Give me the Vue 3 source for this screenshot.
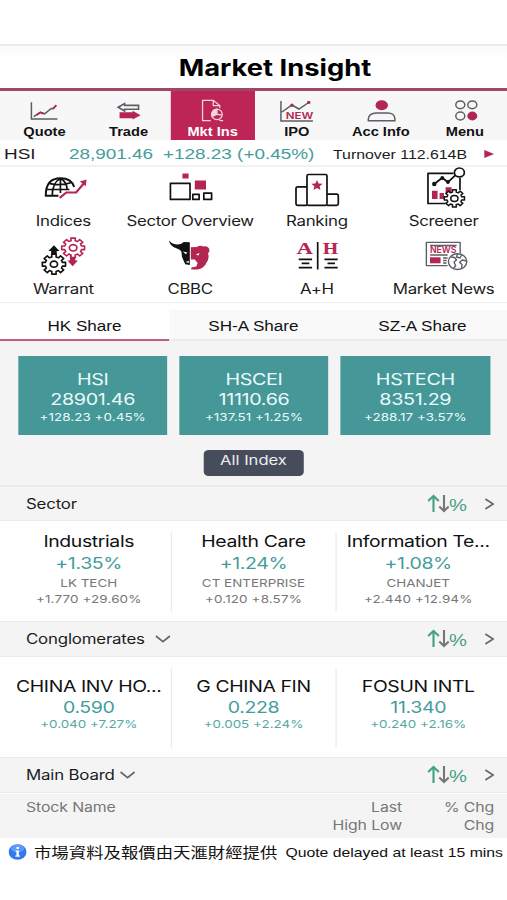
<script setup>
import { ref } from 'vue'

const activeNav = ref('mkt')
const activeTab = ref('HK Share')

const navItems = [
  { id: 'quote', label: 'Quote' },
  { id: 'trade', label: 'Trade' },
  { id: 'mkt', label: 'Mkt Ins' },
  { id: 'ipo', label: 'IPO' },
  { id: 'acc', label: 'Acc Info' },
  { id: 'menu', label: 'Menu' },
]

const shortcuts = [
  { id: 'indices', label: 'Indices' },
  { id: 'sector', label: 'Sector Overview' },
  { id: 'ranking', label: 'Ranking' },
  { id: 'screener', label: 'Screener' },
  { id: 'warrant', label: 'Warrant' },
  { id: 'cbbc', label: 'CBBC' },
  { id: 'ah', label: 'A+H' },
  { id: 'news', label: 'Market News' },
]

const tabs = ['HK Share', 'SH-A Share', 'SZ-A Share']

const indices = [
  { name: 'HSI', value: '28901.46', change: '+128.23 +0.45%' },
  { name: 'HSCEI', value: '11110.66', change: '+137.51 +1.25%' },
  { name: 'HSTECH', value: '8351.29', change: '+288.17 +3.57%' },
]

const sections = [
  {
    title: 'Sector',
    dropdown: false,
    cards: [
      { name: 'Industrials', value: '+1.35%', stock: 'LK TECH', change: '+1.770 +29.60%' },
      { name: 'Health Care', value: '+1.24%', stock: 'CT ENTERPRISE', change: '+0.120 +8.57%' },
      { name: 'Information Te...', value: '+1.08%', stock: 'CHANJET', change: '+2.440 +12.94%' },
    ],
  },
  {
    title: 'Conglomerates',
    dropdown: true,
    cards: [
      { name: 'CHINA INV HO...', value: '0.590', change: '+0.040 +7.27%' },
      { name: 'G CHINA FIN', value: '0.228', change: '+0.005 +2.24%' },
      { name: 'FOSUN INTL', value: '11.340', change: '+0.240 +2.16%' },
    ],
  },
  { title: 'Main Board', dropdown: true, cards: [] },
]

// outline of an eight-toothed cog
function gear(cx, cy, rx, ry) {
  const pts = []
  for (let i = 0; i < 8; i++) {
    const mid = (i * Math.PI) / 4
    for (const [da, k] of [[-0.24, 0.72], [-0.19, 0.97], [0.19, 0.97], [0.24, 0.72]]) {
      const a = mid + da
      pts.push(`${(cx + Math.cos(a) * rx * k).toFixed(2)} ${(cy + Math.sin(a) * ry * k).toFixed(2)}`)
    }
  }
  return `M${pts.join('L')}Z`
}
</script>

<template>
  <div class="page">
    <div class="status"></div>
    <header class="header">Market Insight</header>

    <nav class="nav">
      <div
        v-for="item in navItems"
        :key="item.id"
        class="nav__item"
        :class="{ 'nav__item--active': item.id === activeNav }"
        @click="activeNav = item.id"
      >
        <svg class="nav__icon" viewBox="0 0 40 24" preserveAspectRatio="none" fill="none" stroke="#5b5e66" stroke-width="1.5">
          <template v-if="item.id === 'quote'">
            <path d="M7 3.3V20H33" />
            <path d="M9.3 17.7 16 13.4 20.3 14.8 26.7 9.5 28.5 9.8 31.7 6.5" />
            <path d="M12 16 16 13.4 19 14.6M28.5 9.8 32 6.2" stroke="#b32652" stroke-width="1.8" />
          </template>
          <template v-else-if="item.id === 'trade'">
            <path d="M9.6 8.2 16 4.6V6.4H30V10.2H16V12Z" stroke-width="1.6" />
            <path d="M11 13.2H24V11.8L32 16.2 24 20.6V19.2H11Z" fill="#b32652" stroke="none" />
          </template>
          <template v-else-if="item.id === 'mkt'">
            <g stroke="#f3d3de" stroke-width="1.3">
              <path d="M18 21.7H9.8V1.3H20.5L27 6.5V9M20.5 1.3V6.7H27" />
              <circle cx="24.2" cy="15.4" r="5.3" />
              <path d="M24.2 15.4V10.2A5.2 5.2 0 0 0 19.5 17.5Z" fill="#f3d3de" />
              <path d="M24.2 15.4 29 16M26 20.5 28 21.7H30.4" />
            </g>
          </template>
          <template v-else-if="item.id === 'ipo'">
            <path d="M4 2V22H36M5 13 15 6 22 10 31.7 3.5" />
            <g fill="#b32652" stroke="none">
              <circle cx="15" cy="6.2" r="1.7" />
              <circle cx="31.8" cy="3.4" r="1.7" />
              <text x="8.8" y="20" font-size="9.6" font-weight="600" textLength="27.5" lengthAdjust="spacingAndGlyphs">NEW</text>
            </g>
          </template>
          <template v-else-if="item.id === 'acc'">
            <ellipse cx="20.6" cy="6.3" rx="6.2" ry="5" fill="#b32652" stroke="none" />
            <path d="M7.2 21.8V20C7.2 16.5 10.5 14 15 14H26.5C31 14 33.8 16.5 33.8 20V21.8Z" />
          </template>
          <template v-else>
            <ellipse cx="15" cy="5.8" rx="4.5" ry="3.9" />
            <ellipse cx="27" cy="5.8" rx="4.5" ry="3.9" />
            <ellipse cx="15" cy="17" rx="4.5" ry="3.9" />
            <ellipse cx="27" cy="17" rx="5" ry="4.4" fill="#b32652" stroke="none" />
          </template>
        </svg>
        <span>{{ item.label }}</span>
      </div>
    </nav>

    <div class="ticker">
      <span class="ticker__name">HSI</span>
      <span class="ticker__up ticker__value">28,901.46</span>
      <span class="ticker__up ticker__change">+128.23 (+0.45%)</span>
      <span class="ticker__turnover">Turnover 112.614B</span>
      <i class="ticker__arrow"></i>
    </div>

    <section class="shortcuts">
      <div v-for="s in shortcuts" :key="s.id" class="shortcut">
        <svg class="shortcut__icon" viewBox="0 0 60 42" preserveAspectRatio="none" fill="none" stroke="#111" stroke-width="1.7" stroke-linejoin="round">
          <template v-if="s.id === 'indices'">
            <path d="M25.5 28.8H12.8C12.8 17 18 11.3 27.5 11.3 35 11.3 39.5 14.5 41.2 20" stroke-width="2" />
            <path d="M19.3 29C19.3 20 22 14 27.5 11.5M27.5 11.3V26M28 11.5C32 14 34 18 34.2 22.5M13.3 22.5H36.5M17 16.6C23 18 32 17.8 38.5 15.5" stroke-width="1.7" />
            <path d="M26.7 30.8 33.4 25.5H43.2L51 16.2" stroke="#b32652" stroke-width="2.2" stroke-linejoin="miter" />
            <path d="M53.6 12.6 47 14.6 52.8 19.2Z" fill="#b32652" stroke="none" />
          </template>
          <template v-else-if="s.id === 'sector'">
            <path d="M10.6 16.4H30.2V32.4H10.6ZM33 27.4H39.3V32.4H33ZM44 26.2H51.8V32.4H44Z" />
            <path d="M22.6 6.6H28.8V11.4H22.6ZM35 13.6H46.2V22.5H35Z" fill="#b32652" stroke="none" />
          </template>
          <template v-else-if="s.id === 'ranking'">
            <rect x="20.3" y="7.5" width="20" height="30.8" rx="1.5" />
            <path d="M20.3 19.8H11Q9.3 19.8 9.3 21.5V36.6Q9.3 38.3 11 38.3H20.3M40.3 27.2H50Q51.6 27.2 51.6 28.8V36.7Q51.6 38.3 50 38.3H40.3" />
            <path d="M30.3 13 31.9 16.4 36 16.8 32.9 19.2 33.8 22.9 30.3 21 26.8 22.9 27.7 19.2 24.6 16.8 28.7 16.4Z" fill="#b32652" stroke="none" />
          </template>
          <template v-else-if="s.id === 'screener'">
            <path d="M40 6.4H14.4V36.5H32M46.4 11V23" />
            <path d="M20.7 17 28.7 10.7 34.4 15.2 42 8.2" stroke-width="1.8" />
            <path d="M18.4 23.7H24V32H18.4ZM26 26H30.4V32H26ZM32 20.3H38V27H32Z" fill="#b32652" stroke="none" />
            <ellipse cx="45.8" cy="5.4" rx="5" ry="4.4" fill="#fff" />
            <g fill="#111" stroke="none">
              <circle cx="20.7" cy="17" r="2.2" />
              <circle cx="28.7" cy="11" r="1.9" />
              <circle cx="34.4" cy="15" r="1.9" />
            </g>
            <path :d="gear(40.8, 31.4, 10.6, 9)" fill="#fff" stroke-width="1.5" />
            <ellipse cx="40.8" cy="31.4" rx="3.6" ry="3" stroke-width="1.5" />
          </template>
          <template v-else-if="s.id === 'warrant'">
            <path d="M21 10.3 26.5 16H23.8V21H18.2V16H15.5Z" fill="#111" stroke="none" />
            <path d="M39.7 31.3 45 25.5H42.4V20H37V25.5H34.4Z" fill="#b32652" stroke="none" />
            <path :d="gear(21, 29.2, 12.2, 10.4)" fill="#fff" stroke-width="1.6" />
            <ellipse cx="21" cy="29.2" rx="3.6" ry="3" />
            <path :d="gear(40.2, 12.8, 12, 10.2)" fill="#fff" stroke="#b32652" stroke-width="1.6" />
            <ellipse cx="40.2" cy="12.8" rx="3.8" ry="3.2" stroke="#b32652" />
          </template>
          <template v-else-if="s.id === 'cbbc'">
            <g stroke="none">
              <path d="M9.2 5.3Q10 11.5 16.5 13.2L19.5 14.5 21.6 16.5 22.2 22 25.4 29.2 30 30V7.2L24 7 21 9 17.5 9.6Q12.5 9.6 9.2 5.3Z" fill="#111" />
              <path d="M31 12.2 37 12Q40 9.6 43.6 11.4 49.8 10.8 49.6 16.3L48.2 18.4Q50 23.5 46.5 28 44.5 33.5 37.5 34.4H31.5V32.4L36.5 31.5 37.8 28 35 24.5 31 24.5Z" fill="#b32652" />
              <path d="M23 16.5 27.5 17.4 26 19.2ZM25.8 27 29 25.8V28ZM36 19.4 39.6 18 38.8 20.6ZM31 28 34.5 28.8 31.5 30.6Z" fill="#fff" />
            </g>
          </template>
          <template v-else-if="s.id === 'ah'">
            <g class="serif" fill="#b32652" stroke="#b32652" stroke-width=".2" font-size="17">
              <text x="10" y="19" textLength="16" lengthAdjust="spacingAndGlyphs">A</text>
              <text x="36.4" y="19" textLength="15" lengthAdjust="spacingAndGlyphs">H</text>
            </g>
            <path d="M31 7V34.5" />
            <path d="M12 24.3H25.4M15 28.3H22.6M12 32.6H25.4M37.8 24.3H51M40.8 28.3H48.3M37.8 32.6H51" />
          </template>
          <template v-else>
            <g stroke="#5b5e66" stroke-width="1.4">
              <path d="M46.6 18V7.4H12.8V30.6H34M16.5 10.5H43M16.5 20H34M29.5 23H34M29.5 25.5H33M29.5 28H33" />
              <path d="M16.4 22.3H27V28.3H16.4Z" fill="#b32652" stroke="none" />
              <ellipse cx="44" cy="26.6" rx="9.2" ry="7.9" fill="#fff" />
              <path d="M37.5 22 41 22.5 43 25 40.5 27 42 31 40 33M44 19 43 22 46.5 23 48 20M53 26 48.5 25 46 27.5 48.5 29.5 48 33" />
            </g>
            <text x="16.4" y="18.2" fill="#b32652" stroke="none" font-size="8.6" font-weight="600" textLength="26.4" lengthAdjust="spacingAndGlyphs">NEWS</text>
          </template>
        </svg>
        <span class="shortcut__label">{{ s.label }}</span>
      </div>
    </section>

    <div class="tabs">
      <div
        v-for="tab in tabs"
        :key="tab"
        class="tabs__item"
        :class="{ 'tabs__item--active': tab === activeTab }"
        @click="activeTab = tab"
      >
        {{ tab }}
      </div>
    </div>

    <section class="indices">
      <div class="indices__row">
        <div v-for="item in indices" :key="item.name" class="tile">
          <div class="tile__main">{{ item.name }}</div>
          <div class="tile__main">{{ item.value }}</div>
          <div class="tile__change">{{ item.change }}</div>
        </div>
      </div>
      <button class="all-index">All Index</button>
    </section>

    <section v-for="section in sections" :key="section.title" class="section">
      <div class="bar" :class="{ 'bar--dropdown': section.dropdown }">
        <span>{{ section.title }}</span>
        <svg v-if="section.dropdown" class="bar__down" viewBox="0 0 16 8" preserveAspectRatio="none">
          <path d="M1 1 8 6.6 15 1" fill="none" stroke="#666" stroke-width="1.7" />
        </svg>
        <svg class="bar__sort" viewBox="0 0 22 20" preserveAspectRatio="none" fill="none" stroke-width="2.1">
          <path d="M6.5 18V2M1.2 7 6.5 2 11.8 7" stroke="#45a087" />
          <path d="M17 1V17M12.3 12.5 17 17 21.7 12.5" stroke="#777" />
        </svg>
        <span class="bar__percent">%</span>
        <svg class="bar__more" viewBox="0 0 10 12" preserveAspectRatio="none">
          <path d="M1 1 8.8 6 1 11" fill="none" stroke="#6b6b6b" stroke-width="1.8" />
        </svg>
      </div>
      <div v-if="section.cards.length" class="cards" :class="{ 'cards--plain': section.dropdown }">
        <div v-for="card in section.cards" :key="card.name" class="card">
          <div class="card__name">{{ card.name }}</div>
          <div class="card__value">{{ card.value }}</div>
          <div v-if="card.stock" class="card__small card__stock">{{ card.stock }}</div>
          <div class="card__small">{{ card.change }}</div>
        </div>
      </div>
    </section>

    <div class="thead">
      <div class="thead__name">Stock Name</div>
      <div class="thead__last">Last<br />High Low</div>
      <div class="thead__chg">% Chg<br />Chg</div>
    </div>

    <footer class="footer">
      <svg class="footer__info" viewBox="0 0 18 16" preserveAspectRatio="none">
        <ellipse cx="9" cy="8" rx="9" ry="7.7" fill="#3478ee" />
        <ellipse cx="9" cy="4.6" rx="6.5" ry="3.8" fill="#5f9af5" />
        <path d="M7.9 3H10.3V5H7.9ZM7 6.4H10.3V11.6H11.4V12.8H6.8V11.6H7.9V7.6H7Z" fill="#fff" />
      </svg>
      <span class="footer__cjk">市場資料及報價由天滙財經提供</span>
      <span class="footer__delay">Quote delayed at least 15 mins</span>
    </footer>
  </div>
</template>

<style>
body {
  background: #fff;
  overflow: hidden;
}
</style>

<style scoped>
/* wide-format display: everything is laid out narrow and stretched sideways */
.page {
  --sx: 1.22;
  width: calc(507px / var(--sx));
  height: 900px;
  transform: scaleX(var(--sx));
  transform-origin: 0 0;
  box-sizing: border-box;
  overflow: hidden;
  background: #fff;
  color: #1c1c1c;
  font-family: Inter, "Liberation Sans", sans-serif;
  white-space: nowrap;
}

.page * {
  box-sizing: border-box;
}

.status {
  height: 46px;
  border-bottom: 2px solid #ebebeb;
}

.header {
  height: 42px;
  padding-left: calc(43px / var(--sx));
  background: linear-gradient(#f9f9f9, #fff 14px);
  color: #000;
  font-size: 22.4px;
  font-weight: 700;
  line-height: 43px;
  text-align: center;
}

.nav {
  display: flex;
  height: 52px;
  padding-left: 2px;
  border-top: 3px solid #a04765;
  background: #f7f7f7;
}

.nav__item {
  flex: 1;
  display: flex;
  flex-direction: column;
  align-items: center;
  padding-top: 8px;
  color: #111;
  font: 700 12px/18px "Liberation Sans", sans-serif;
}

.nav__item--active {
  background: #bd2556;
  color: #fff;
}

.nav__icon {
  flex: none;
  width: calc(40px / var(--sx));
  height: 24px;
  font-family: Inter, sans-serif;
}

.ticker {
  display: flex;
  align-items: center;
  height: 27px;
  padding: 3px calc(13px / var(--sx)) 0 calc(4px / var(--sx));
  border-bottom: 2px solid #f1f1f1;
  font: 15.5px/24px "Liberation Sans", sans-serif;
}

.ticker__name {
  width: calc(65px / var(--sx));
}

.ticker__up {
  color: #449d9b;
}

.ticker__value {
  width: calc(94px / var(--sx));
}

.ticker__change {
  width: calc(170px / var(--sx));
}

.ticker__turnover {
  padding-top: 1px;
  font-size: 13px;
}

.ticker__arrow {
  margin-left: auto;
  border: 4px solid transparent;
  border-left: 8px solid #b32652;
  border-right: 0;
}

.shortcuts {
  display: grid;
  grid-template-columns: repeat(4, minmax(0, 1fr));
  grid-auto-rows: 67.5px;
  height: 136px;
  border-bottom: 1px solid #eee;
}

.shortcut {
  display: flex;
  flex-direction: column;
  align-items: center;
}

.shortcut__icon {
  flex: none;
  width: calc(60px / var(--sx));
  height: 42px;
  overflow: visible;
}

.shortcut__label {
  margin-top: 2px;
  font-size: 13.8px;
  letter-spacing: -0.25px;
  line-height: 20px;
}

.serif {
  font-family: "Liberation Serif", serif;
  font-weight: 700;
}

.tabs {
  display: flex;
  height: 38px;
  padding-top: 7px;
}

.tabs__item {
  flex: 1;
  border-bottom: 2px solid #ececec;
  background: #f9f9f9;
  color: #111;
  font: 14px/33px "Liberation Sans", sans-serif;
  text-align: center;
}

.tabs__item--active {
  border-color: #bf5f7e;
  background: #fff;
}

.indices {
  height: 144px;
  padding-top: 15px;
  background: #f4f4f4;
  text-align: center;
}

.indices__row {
  display: flex;
  gap: calc(12px / var(--sx));
  padding: 0 calc(17px / var(--sx)) 0 calc(18px / var(--sx));
}

.tile {
  flex: 1 1 0;
  min-width: 0;
  height: 79px;
  padding-top: 13px;
  background: #459798;
  color: #e9fbfb;
}

.tile__main {
  font-size: 16.2px;
  letter-spacing: -0.3px;
  line-height: 20px;
}

.tile__change {
  font-size: 11px;
  letter-spacing: 0.05px;
  line-height: 16px;
}

.all-index {
  display: block;
  width: calc(100px / var(--sx));
  height: 26px;
  margin: 15px auto 0;
  padding: 0 0 6px;
  border: 0;
  border-radius: 4px;
  background: #474c5a;
  color: #eceef2;
  font: 13.6px/20px Inter, sans-serif;
}

.bar {
  display: flex;
  align-items: center;
  height: 36px;
  padding: 0 calc(13px / var(--sx)) 0 calc(26px / var(--sx));
  border: solid #ebebeb;
  border-width: 2px 0 1px;
  background: #f4f4f4;
  font-size: 13.8px;
  letter-spacing: -0.15px;
}

.bar--dropdown {
  padding-bottom: 1px;
  border-top-width: 1px;
}

.bar__down {
  width: calc(16px / var(--sx));
  height: 8px;
  margin-left: calc(10px / var(--sx));
}

.section:last-of-type .bar__down {
  margin-left: calc(5px / var(--sx));
}

.bar__sort {
  width: calc(22px / var(--sx));
  height: 20px;
  margin-left: auto;
}

.bar__percent {
  width: calc(18px / var(--sx));
  padding-top: 3px;
  color: #45a087;
  font: 16.5px/20px "Liberation Sans", sans-serif;
}

.bar__more {
  width: calc(10px / var(--sx));
  height: 12px;
  margin-left: calc(17px / var(--sx));
}

.cards {
  display: flex;
  height: 100px;
  padding: 11px calc(7px / var(--sx)) 9px;
}

.card {
  flex: 1 1 0;
  min-width: 0;
  text-align: center;
}

.card + .card {
  border-left: 1.5px solid #eaeaea;
}

.card__name {
  margin-top: -1px;
  color: #111;
  font-size: 15.9px;
  letter-spacing: -0.3px;
  line-height: 21px;
}

.card__value {
  color: #449d9b;
  font-size: 16px;
  letter-spacing: -0.3px;
  line-height: 22.5px;
}

.card__small {
  color: #777;
  font-size: 11px;
  letter-spacing: 0.12px;
  line-height: 16.5px;
}

.card__stock {
  letter-spacing: 0;
}

.cards--plain .card__name {
  margin-top: 8px;
}

.cards--plain .card__value {
  line-height: 20px;
}

.cards--plain .card__small {
  color: #55a9a4;
  letter-spacing: 0;
  line-height: 15px;
}

.thead {
  display: flex;
  height: 45px;
  padding: 4px calc(13px / var(--sx)) 0 calc(26px / var(--sx));
  border-top: 1px solid #fff;
  background: #f4f4f4;
  color: #777;
  font-size: 13px;
  letter-spacing: -0.1px;
  line-height: 18px;
  text-align: right;
}

.thead__name {
  flex: 1;
  text-align: left;
}

.thead__chg {
  width: calc(92px / var(--sx));
}

.footer {
  display: flex;
  align-items: center;
  height: 28px;
  padding-left: calc(9px / var(--sx));
  color: #111;
}

.footer__info {
  flex: none;
  width: calc(18px / var(--sx));
  height: 16px;
}

.footer__cjk {
  margin: 0 calc(8px / var(--sx)) 0 calc(7px / var(--sx));
  font: 14.25px/20px "Noto Sans CJK TC", sans-serif;
}

.footer__delay {
  padding-top: 1px;
  font: 12.95px/20px "Liberation Sans", sans-serif;
}
</style>
